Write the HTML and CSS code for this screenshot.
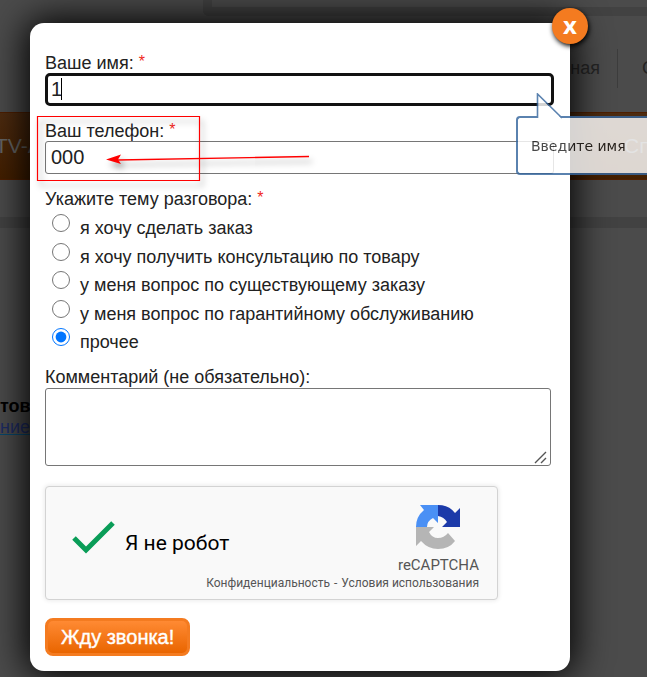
FILE: index.html
```html
<!DOCTYPE html>
<html lang="ru">
<head>
<meta charset="utf-8">
<meta name="viewport" content="width=device-width, initial-scale=1">
<title>Обратный звонок</title>
<link rel="stylesheet" href="styles.css">
</head>
<body>
<div class="page">
  <div class="page-top"></div>
  <nav class="page-links"><span class="page-link">Главная</span><span class="page-link page-link-next">С</span></nav>
  <nav class="page-menu"><span>TV-А</span><span class="menu-right">Сп</span></nav>
  <div class="page-band"></div>
  <div class="page-text"><b>тов</b><a href="#">ние </a></div>
</div>

<main class="modal">
  <button class="close" type="button" aria-label="Закрыть">x</button>
  <form class="form">
    <div class="field">
      <label for="name">Ваше имя: <span class="req">*</span></label>
      <input class="text active" id="name" type="text" value="1">
      <span class="caret"></span>
      <div class="tip">
        <svg class="tip-tail" width="28" height="26" viewBox="0 0 28 26"><path d="M1.5 26V1L26 26z" fill="#fff"/><path d="M1.5 25V1L26 25" fill="none" stroke="#37679e" stroke-width="1.6"/></svg>
        <span>Введите имя</span>
      </div>
    </div>
    <div class="field">
      <label for="phone">Ваш телефон: <span class="req">*</span></label>
      <input class="text" id="phone" type="text" value="000">
      <svg class="mark" width="290" height="80" viewBox="0 0 290 80">
        <path d="M3.5 3.500H165.500V67.500H3.500z" fill="none" stroke="#f00" stroke-width="1.2"/>
        <path d="M84 47L275 43.500" stroke="#f00" stroke-width="1.300"/>
        <path d="M72 46.500L87 41.500L84 46.500L87 51z" fill="#f00"/>
      </svg>
    </div>
    <fieldset class="topics">
      <legend>Укажите тему разговора: <span class="req">*</span></legend>
      <div class="options">
        <label><input type="radio" name="topic"><span>я хочу сделать заказ</span></label>
        <label><input type="radio" name="topic"><span>я хочу получить консультацию по товару</span></label>
        <label><input type="radio" name="topic"><span>у меня вопрос по существующему заказу</span></label>
        <label><input type="radio" name="topic"><span>у меня вопрос по гарантийному обслуживанию</span></label>
        <label><input type="radio" name="topic" checked><span>прочее</span></label>
      </div>
    </fieldset>
    <div class="comment">
      <label for="comment">Комментарий (не обязательно):</label>
      <div class="area">
        <textarea id="comment"></textarea>
        <svg class="grip" width="14" height="14" viewBox="0 0 14 14"><path d="M1 13L12 2M7 13L12 8" stroke="#555" stroke-width="1.400"/></svg>
      </div>
    </div>
    <div class="captcha">
      <div class="robot">
        <svg width="44" height="34" viewBox="0 0 44 34"><path d="M2 18L14 30L41 3" fill="none" stroke="#0a9d58" stroke-width="5"/></svg>
        <span>Я не робот</span>
      </div>
      <div class="brand">
        <svg width="46" height="46" viewBox="0 0 46 46">
          <path d="M1 23A22 22 0 0 1 9 6L5 1H23V19L18 14Q12 17 12 23z" fill="#4a90f5"/>
          <path d="M23 1Q34 1 40 9L45 4V23H27L32 18Q29 13 23 12z" fill="#1c3aa9"/>
          <path d="M1 23H19L14 28Q17 34 23 34Q29 34 33 29L40 37Q34 45 23 45Q13 45 6 37L1 42z" fill="#b5b5b5"/>
        </svg>
        <span>reCAPTCHA</span>
      </div>
      <div class="terms"><a href="#">Конфиденциальность</a><span>-</span><a href="#">Условия использования</a></div>
    </div>
    <button class="submit" type="submit">Жду звонка!</button>
  </form>
</main>
</body>
</html>
```
FILE: styles.css
```css
* { box-sizing: border-box; }
html, body { margin: 0; min-height: 100%; }
body {
  position: relative;
  min-height: 100vh;
  overflow-x: hidden;
  background: #4b4b4b;
  color: #222;
  font: 18px/20px "Liberation Sans", Arial, sans-serif;
}
.page { position: absolute; inset: 0; overflow: hidden; }
.page-top {
  height: 16px;
  margin-left: 203px;
  border: solid #424242;
  border-width: 0 0 9px 9px;
  border-bottom-left-radius: 6px;
}
.page-links {
  display: flex;
  justify-content: flex-end;
  height: 96px;
  padding-top: 33px;
  color: #252525;
  white-space: nowrap;
}
.page-link { height: 39px; padding-right: 17px; line-height: 38px; }
.page-link-next { width: 30px; padding: 0 0 0 24px; border-left: 1px solid #3d3d3d; overflow: hidden; }
.page-menu {
  display: flex;
  justify-content: space-between;
  height: 68px;
  border: solid #4d1e00;
  border-width: 1px 0;
  background: linear-gradient(#4d2b10, #431f00);
  color: #656565;
  font-size: 21px;
  line-height: 66px;
  white-space: nowrap;
}
.page-menu span:first-child { margin-left: -5px; }
.menu-right { width: 23px; overflow: hidden; }
.page-band { height: 11px; margin-top: 37px; background: #424242; }
.page-text { display: grid; gap: 1px; justify-items: start; margin-top: 168px; color: #000; white-space: nowrap; }
.page-text a { white-space: pre; color: #1d2b62; text-decoration-color: #07476c; }

.modal {
  position: relative;
  max-width: 540px;
  margin: 23px 77px 6px 30px;
  padding: 30px 15px 15px;
  border-radius: 14px;
  background: #fff;
  box-shadow: 0 0 36px 4px #000;
}
.close {
  position: absolute;
  top: -15px;
  right: -18px;
  width: 36px;
  height: 36px;
  padding: 0 0 3px;
  border: 0;
  border-radius: 50%;
  background: #f47b20;
  box-shadow: 1px 2px 5px #000;
  color: #fff;
  font: bold 24px/30px "Open Sans", sans-serif;
}
.field { position: relative; margin: 0 1px 15px 0; }
.field label, .comment label { display: block; }
.req { color: #f0281c; font-size: 16px; vertical-align: 2px; line-height: 16px; }
.text {
  display: block;
  width: 100%;
  height: 33px;
  padding: 0 5px;
  border: 1px solid #767676;
  border-radius: 3px;
  background: #fff;
  color: #222;
  font: 20px/28px "Liberation Sans", Arial, sans-serif;
}
.active { padding: 0 3px; border: 3px solid #111; border-radius: 5px; }
.caret { position: absolute; left: 16px; top: 25px; width: 1px; height: 22px; background: #000; }
.tip {
  position: absolute;
  z-index: 2;
  left: calc(100% - 38px);
  top: 63px;
  width: 131px;
  height: 59px;
  padding-left: 13px;
  border: 2px solid #37679e;
  border-right: 0;
  border-radius: 4px 0 0 4px;
  background: #fff;
  opacity: .82;
  color: #222;
  font: 14px/56px "DejaVu Sans", Verdana, sans-serif;
  white-space: nowrap;
}
.tip-tail { position: absolute; left: 18px; top: -25px; }
.mark { position: absolute; left: -11px; top: -8px; z-index: 1; filter: drop-shadow(3px 5px 3px rgba(0, 0, 0, .4)); }
.topics { margin: 0; padding: 0; border: 0; }
legend { padding: 0; }
.options { display: grid; grid-auto-rows: 1fr; height: 143px; margin-top: 4px; }
.options label { display: flex; gap: 10px; align-items: flex-start; padding-top: 1px; }
.options span { padding-top: 4px; }
.options input { width: 18px; height: 18px; margin: 0 0 0 7px; accent-color: #0075ff; }
.comment { margin-top: 11px; }
.area { position: relative; margin: 1px 4px 0 0; }
textarea {
  display: block;
  width: 100%;
  height: 78px;
  border: 1px solid #767676;
  border-radius: 3px;
  background: #fff;
  resize: none;
}
.grip { position: absolute; right: 3px; bottom: 2px; }
.captcha {
  display: grid;
  grid-template-columns: 1fr auto;
  grid-template-rows: 88px 16px;
  max-width: 453px;
  height: 114px;
  margin-top: 20px;
  padding-right: 18px;
  border: 1px solid #d3d3d3;
  border-radius: 4px;
  background: #f9f9f9;
  box-shadow: 0 0 4px 1px rgba(0, 0, 0, .08);
  color: #555;
  font-family: Roboto, sans-serif;
}
.robot { display: flex; align-items: flex-end; gap: 9px; padding: 0 0 21px 26px; color: #000; font-size: 21px; line-height: 22px; }
.brand { display: flex; flex-direction: column; align-items: center; gap: 5px; padding-top: 17px; font-size: 15px; }
.terms { display: flex; grid-column: 1 / -1; justify-content: flex-end; gap: 4px; font-size: 12px; line-height: 16px; }
.terms a { color: #555; text-decoration: none; }
.submit {
  display: block;
  height: 38px;
  margin-top: 18px;
  padding: 0 13px;
  border: 3px solid #f47b20;
  border-radius: 8px;
  background: linear-gradient(#ff8a33, #e96500);
  color: #fff;
  font: 20px/30px "Liberation Sans", Arial, sans-serif;
  -webkit-text-stroke: 0.4px #fff;
}
```
